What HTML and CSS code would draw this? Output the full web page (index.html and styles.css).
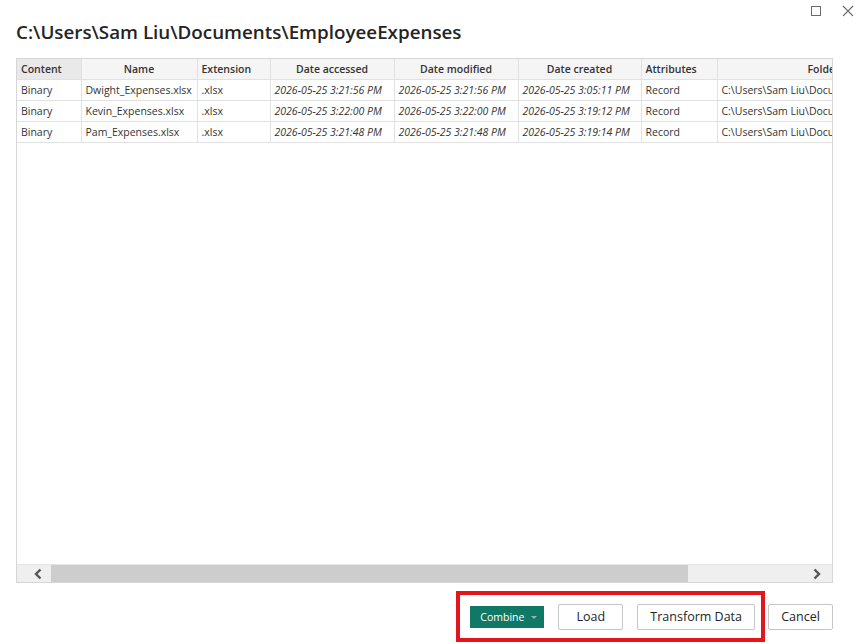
FILE: index.html
```html
<!DOCTYPE html>
<html lang="en">
  <head>
    <meta charset="UTF-8" />
    <meta name="viewport" content="width=device-width, initial-scale=1.0" />
    <title>EmployeeExpenses</title>
    <link rel="stylesheet" href="styles.css">
  </head>
  <body>
    <div class="dialog">
      <div class="window-controls">
        <svg class="win-icon" width="12" height="12" viewBox="0 0 12 12">
          <rect x="1.5" y="1.5" width="9" height="9" fill="none" stroke="#6b6b6b" stroke-width="1"/>
        </svg>
        <svg class="win-icon" width="12" height="12" viewBox="0 0 12 12">
          <path d="M1 1 L11 11 M11 1 L1 11" stroke="#6b6b6b" stroke-width="1.1"/>
        </svg>
      </div>

      <h1 class="title">C:\Users\Sam Liu\Documents\EmployeeExpenses</h1>

      <div class="preview">
        <div class="grid-area">
          <table class="grid">
            <colgroup>
              <col style="width: 64px">
              <col style="width: 116px">
              <col style="width: 73px">
              <col style="width: 124px">
              <col style="width: 124px">
              <col style="width: 123px">
              <col style="width: 76px">
              <col style="width: 240px">
            </colgroup>
            <thead>
              <tr>
                <th class="left first">Content</th>
                <th>Name</th>
                <th class="left">Extension</th>
                <th>Date accessed</th>
                <th>Date modified</th>
                <th>Date created</th>
                <th class="left">Attributes</th>
                <th class="left folder-head">Folder Path</th>
              </tr>
            </thead>
            <tbody>
              <tr>
                <td>Binary</td>
                <td>Dwight_Expenses.xlsx</td>
                <td>.xlsx</td>
                <td class="date">2026-05-25 3:21:56 PM</td>
                <td class="date">2026-05-25 3:21:56 PM</td>
                <td class="date">2026-05-25 3:05:11 PM</td>
                <td>Record</td>
                <td>C:\Users\Sam Liu\Documents\EmployeeExpenses\</td>
              </tr>
              <tr>
                <td>Binary</td>
                <td>Kevin_Expenses.xlsx</td>
                <td>.xlsx</td>
                <td class="date">2026-05-25 3:22:00 PM</td>
                <td class="date">2026-05-25 3:22:00 PM</td>
                <td class="date">2026-05-25 3:19:12 PM</td>
                <td>Record</td>
                <td>C:\Users\Sam Liu\Documents\EmployeeExpenses\</td>
              </tr>
              <tr>
                <td>Binary</td>
                <td>Pam_Expenses.xlsx</td>
                <td>.xlsx</td>
                <td class="date">2026-05-25 3:21:48 PM</td>
                <td class="date">2026-05-25 3:21:48 PM</td>
                <td class="date">2026-05-25 3:19:14 PM</td>
                <td>Record</td>
                <td>C:\Users\Sam Liu\Documents\EmployeeExpenses\</td>
              </tr>
            </tbody>
          </table>
        </div>

        <div class="hscroll">
          <div class="scroll-btn left-btn">
            <svg width="10" height="12" viewBox="0 0 10 12">
              <path d="M7.5 1.5 L3 6 L7.5 10.5" fill="none" stroke="#555" stroke-width="2.4"/>
            </svg>
          </div>
          <div class="scroll-track">
            <div class="scroll-thumb"></div>
          </div>
          <div class="scroll-btn right-btn">
            <svg width="10" height="12" viewBox="0 0 10 12">
              <path d="M2.5 1.5 L7 6 L2.5 10.5" fill="none" stroke="#555" stroke-width="2.4"/>
            </svg>
          </div>
        </div>
      </div>

      <div class="footer">
        <div class="highlight">
          <button class="btn combine">Combine <span class="caret"></span></button>
          <button class="btn wide">Load</button>
          <button class="btn">Transform Data</button>
        </div>
        <button class="btn wide">Cancel</button>
      </div>
    </div>
  </body>
</html>
```

FILE: styles.css
```css
body {
  margin: 0;
  padding: 0;
  background-color: #fff;
  font-family: "Open Sans", "Noto Sans", sans-serif;
  color: #252423;
}
.dialog {
  position: relative;
  width: 858px;
  height: 644px;
  padding: 0 25px 0 16px;
  box-sizing: border-box;
  display: flex;
  flex-direction: column;
}
.window-controls {
  position: absolute;
  top: 5px;
  right: 4px;
  display: flex;
  gap: 20px;
}
.win-icon {
  display: block;
}
.title {
  flex-shrink: 0;
  margin: 19px 0 0 0;
  font-size: 18.8px;
  font-weight: 600;
  line-height: 26px;
  height: 26px;
  color: #252423;
}

/* data preview */
.preview {
  flex-shrink: 0;
  margin-top: 13px;
  width: 817px;
  height: 525px;
  border: 1px solid #d6d6d6;
  box-sizing: border-box;
  display: flex;
  flex-direction: column;
  overflow: hidden;
}
.grid-area {
  flex: 1;
  overflow: hidden;
}
.grid {
  border-collapse: collapse;
  table-layout: fixed;
  width: 940px;
  font-size: 10.5px;
  color: #333;
}
.grid th,
.grid td {
  height: 20px;
  padding: 0 4px;
  border: 1px solid #e1e1e1;
  white-space: nowrap;
  overflow: hidden;
  text-overflow: clip;
}
.grid tr:first-child th {
  border-top: none;
}
.grid th:first-child,
.grid td:first-child {
  border-left: none;
}
.grid th {
  background-color: #f5f5f5;
  font-weight: 600;
  text-align: center;
  color: #333;
}
.grid th.left {
  text-align: left;
}
.grid th.first {
  background-color: #e9e9e9;
}
.grid th.folder-head {
  padding-left: 90px;
}
.grid td.date {
  font-style: italic;
}

/* horizontal scroll bar */
.hscroll {
  flex-shrink: 0;
  height: 17px;
  display: flex;
  background-color: #efefef;
  border-top: 1px solid #e4e4e4;
}
.scroll-btn {
  width: 34px;
  display: flex;
  align-items: center;
  box-sizing: border-box;
}
.left-btn {
  justify-content: flex-end;
  padding-right: 8px;
}
.right-btn {
  justify-content: flex-start;
  padding-left: 14px;
}
.scroll-track {
  flex: 1;
  display: flex;
}
.scroll-thumb {
  width: 637px;
  height: 100%;
  background-color: #cdcdcd;
}

/* buttons */
.footer {
  flex-shrink: 0;
  margin-top: 8px;
  display: flex;
  justify-content: flex-end;
  align-items: center;
  width: 817px;
}
.highlight {
  display: flex;
  align-items: center;
  gap: 14px;
  border: 4px solid #e5161b;
  padding: 0 6px 0 10px;
  margin-right: 3px;
  height: 51px;
  box-sizing: border-box;
}
.btn {
  height: 26px;
  padding: 0 12px;
  background-color: #fff;
  border: 1px solid #c8c6c4;
  border-radius: 2px;
  font-family: "Open Sans", "Noto Sans", sans-serif;
  font-size: 12.5px;
  color: #252423;
}
.btn.wide {
  width: 65px;
}
.btn.combine {
  height: 22px;
  width: 74px;
  padding: 0 0 0 10px;
  text-align: left;
  border: none;
  border-radius: 0;
  background-color: #117865;
  color: #fff;
  font-size: 10.5px;
}
.caret {
  display: inline-block;
  margin-left: 4px;
  vertical-align: middle;
  border-left: 3px solid transparent;
  border-right: 3px solid transparent;
  border-top: 3px solid #8fb8ae;
}
```
